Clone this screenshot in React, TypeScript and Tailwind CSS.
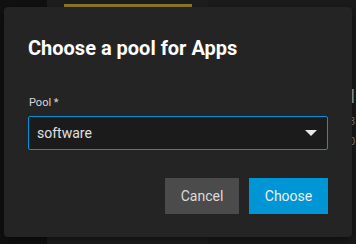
import React from 'react';

export default function App() {
  return (
    <div className="relative w-[356px] h-[244px] overflow-hidden bg-[#1b1b1b] font-['Roboto',sans-serif]">
      {/* Backdrop page */}
      <div className="flex h-full">
        <div className="w-[47px] h-full bg-[#111111]" />
        <div className="w-[161px] h-full bg-[#1e1e1e] pt-[4px] pl-[17px]">
          <div className="w-[128px] h-[3px] bg-[#8f7f2e]" />
        </div>
        <div className="flex-1 h-full bg-[#1b1b1b] flex flex-col items-end pt-[86px] pr-[1px] text-[#8a8a8a]">
          <span className="text-[18px] leading-[22px] text-[#b0b0b0]">l</span>
          <span className="mt-[8px] text-[10px] leading-[12px]">3</span>
          <span className="mt-[8px] text-[10px] leading-[12px]">0</span>
        </div>
      </div>

      {/* Dialog */}
      <div className="absolute left-[4px] top-[7px] w-[348px] h-[230px] rounded-[4px] bg-[#242424] shadow-[0_4px_12px_rgba(0,0,0,0.5)] px-[24px] pt-[29px] flex flex-col">
        <h2 className="text-[20px] leading-[24px] font-bold text-white">Choose a pool for Apps</h2>

        <label className="mt-[36px] ml-[1px] text-[11px] leading-[14px] text-[#d8d8d8]">Pool *</label>
        <div className="mt-[6px] h-[34px] w-[300px] border border-[#0095d5] rounded-[2px] bg-[#1b1b1b] flex items-center justify-between pl-[8px] pr-[10px]">
          <span className="text-[14px] text-[#e0e0e0]">software</span>
          <svg width="12" height="6" viewBox="0 0 12 6">
            <path d="M0 0 L12 0 L6 6 Z" fill="#e8e8e8" />
          </svg>
        </div>

        <div className="mt-[28px] flex justify-end gap-[10px] w-[300px]">
          <button className="w-[74px] h-[36px] bg-[#4b4b4b] text-[14px] text-[#dcdcdc]">Cancel</button>
          <button className="w-[79px] h-[36px] bg-[#0095d5] text-[14px] text-[#f0f0f0]">Choose</button>
        </div>
      </div>
    </div>
  );
}
